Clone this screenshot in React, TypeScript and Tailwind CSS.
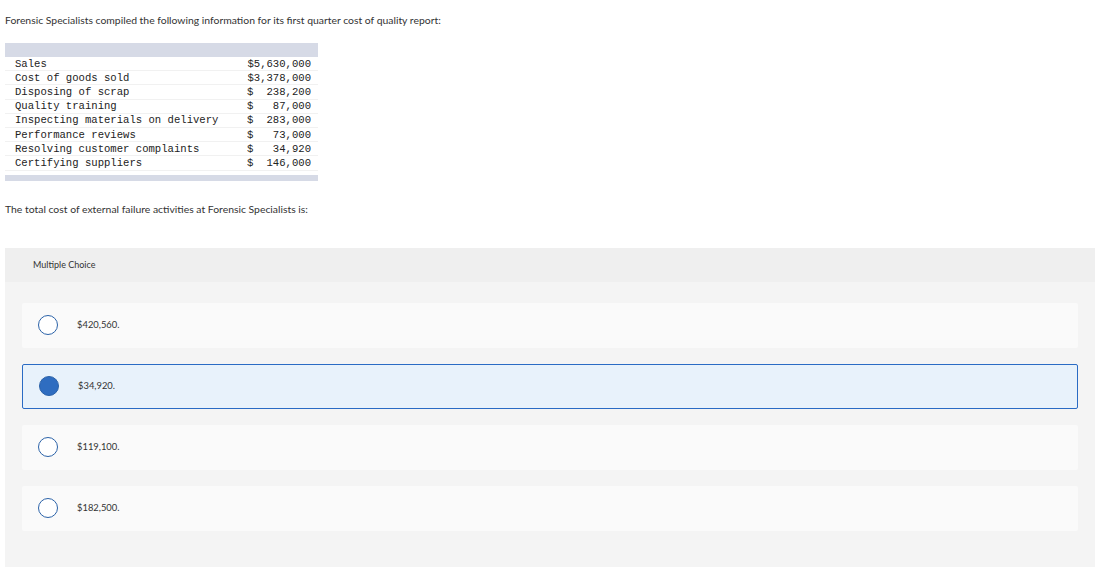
const rows: [string, string, string][] = [
  ["Sales", "", "$5,630,000"],
  ["Cost of goods sold", "", "$3,378,000"],
  ["Disposing of scrap", "$", "238,200"],
  ["Quality training", "$", "87,000"],
  ["Inspecting materials on delivery", "$", "283,000"],
  ["Performance reviews", "$", "73,000"],
  ["Resolving customer complaints", "$", "34,920"],
  ["Certifying suppliers", "$", "146,000"],
];

const choices = ["$420,560.", "$34,920.", "$119,100.", "$182,500."];

export default function App() {
  const selected = 1;
  return (
    <div className="w-[1105px] h-[581px] bg-white px-[5px] pt-[14px] text-[#333] font-['Lato','Open_Sans',sans-serif]">
      <p className="text-[10.4px] leading-[12px]">
        Forensic Specialists compiled the following information for its first quarter cost of quality report:
      </p>

      <div className="mt-[17px] w-[313px]">
        <div className="h-[14px] bg-[#d6dae6]" />
        <div className="font-['Liberation_Mono',monospace] text-[10.6px] leading-[14px] text-[#222]">
          {rows.map(([label, sign, amount]) => (
            <div key={label} className="flex h-[14.2px] items-center border-b border-[#f1f1f1] pl-[10px] pr-[7px]">
              <span className="flex-1 whitespace-nowrap">{label}</span>
              <span className="flex w-[66px] justify-between whitespace-nowrap">
                <span className="pl-[2px]">{sign}</span>
                <span>{amount}</span>
              </span>
            </div>
          ))}
        </div>
        <div className="mt-[4px] h-[6px] bg-[#d6dae6]" />
      </div>

      <p className="mt-[22px] text-[10.4px] leading-[12px]">
        The total cost of external failure activities at Forensic Specialists is:
      </p>

      <div className="mt-[33px] w-[1090px] h-[319px] bg-[#f4f4f4]">
        <div className="h-[34px] bg-[#efefef] flex items-center pl-[28px] text-[9px]">Multiple Choice</div>
        <div className="flex flex-col gap-[16px] px-[17px] pt-[21px]">
          {choices.map((c, i) => {
            const on = i === selected;
            return (
              <div
                key={c}
                className={`flex h-[45px] items-center rounded-[2px] pl-[16px] ${on ? "bg-[#e8f2fb] border border-[#2a6bc4]" : "bg-[#fafafa]"}`}
              >
                <span
                  className={`w-[20px] h-[20px] rounded-full border-[1.5px] border-[#2b62a8] ${on ? "bg-[#2f6dc0]" : "bg-white"}`}
                />
                <span className="ml-[19px] text-[9.4px]">{c}</span>
              </div>
            );
          })}
        </div>
      </div>
    </div>
  );
}
